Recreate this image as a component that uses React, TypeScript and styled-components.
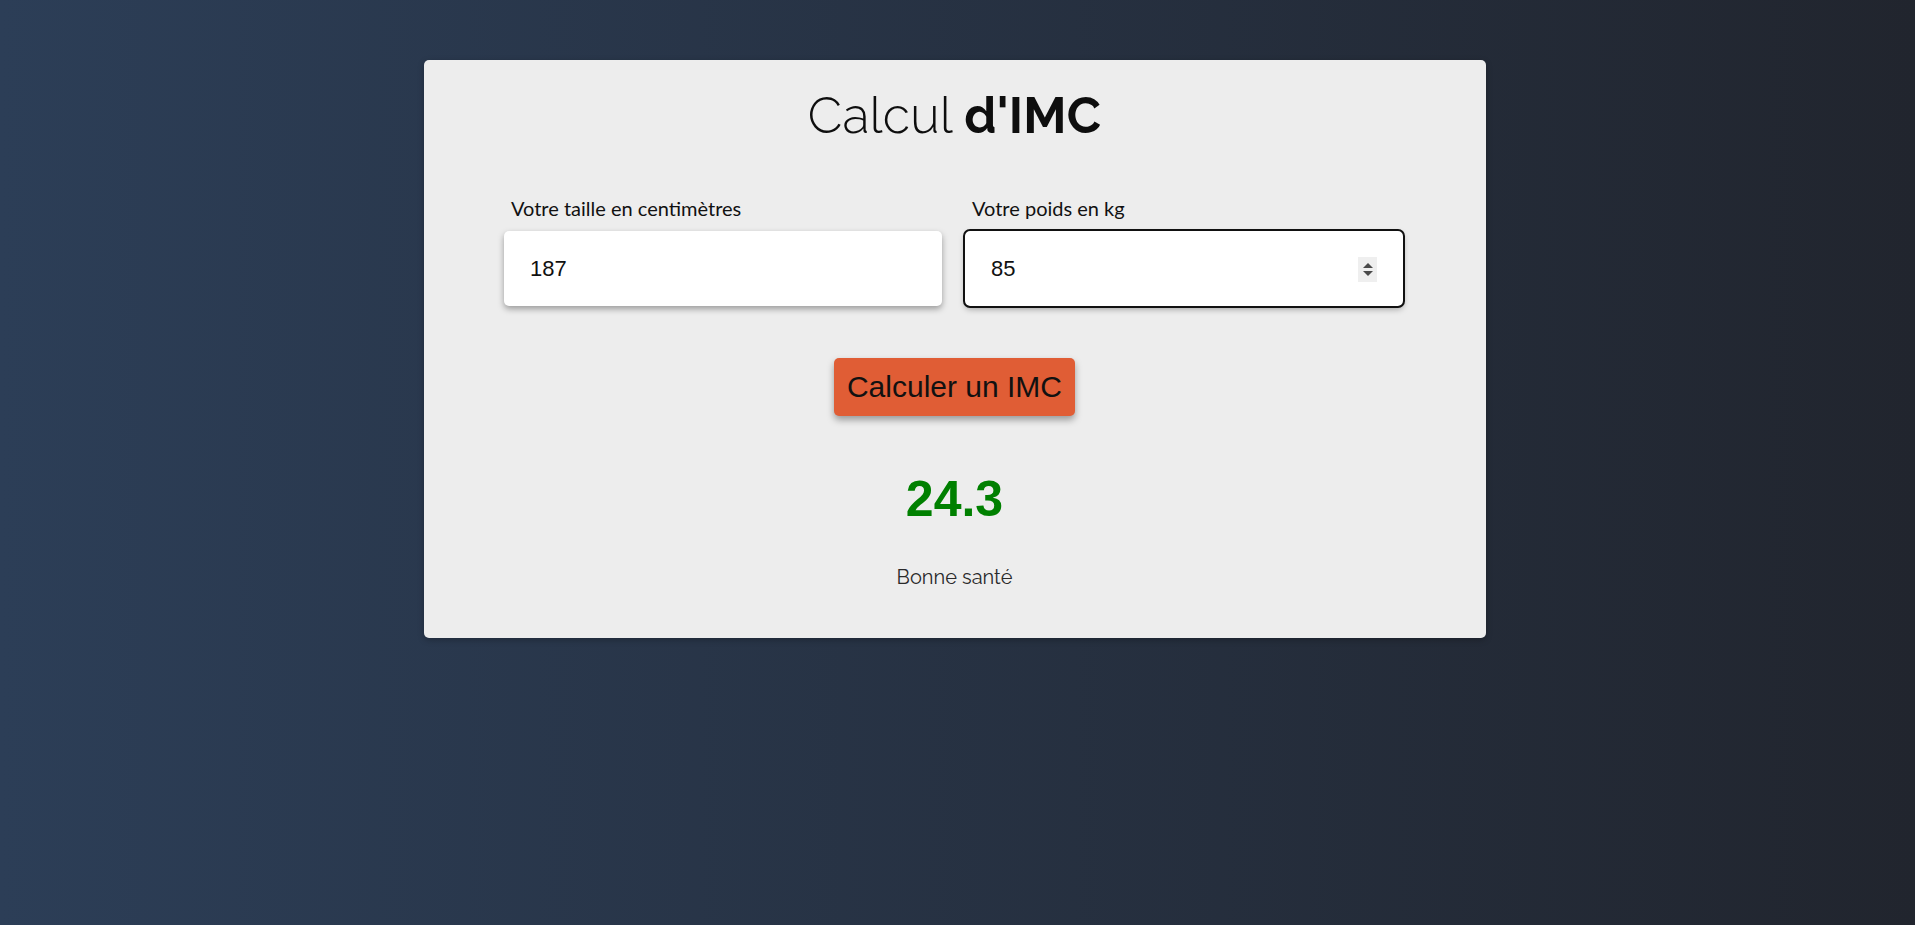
import React from "react";
import styled, { createGlobalStyle } from "styled-components";

const GlobalStyle = createGlobalStyle`
  * { box-sizing: border-box; }
  html, body { margin: 0; padding: 0; }
  body {
    min-height: 100vh;
    background: linear-gradient(to right, #2c3e57, #21252e);
    font-family: "Lato", "Liberation Sans", sans-serif;
  }
`;

const Page = styled.main`
  min-height: 100vh;
  padding-top: 60px;
`;

const Card = styled.section`
  width: 1062px;
  margin: 0 auto;
  transform: translateX(-3px);
  background: #ededed;
  border-radius: 5px;
  box-shadow: 0 2px 6px rgba(0, 0, 0, 0.25);
  padding: 28px 0 49px;
  display: flex;
  flex-direction: column;
  align-items: center;
`;

const Title = styled.h1`
  margin: 0;
  font-family: "Raleway", "Lato", sans-serif;
  font-weight: 300;
  font-size: 50px;
  line-height: 56px;
  color: #0e0e0e;
  letter-spacing: 0.2px;
  strong { font-weight: 700; }
`;

const Fields = styled.div`
  margin-top: 52px;
  display: grid;
  grid-template-columns: 438px 438px;
  column-gap: 23px;
  transform: translateX(-1px);
`;

const Field = styled.label`
  display: flex;
  flex-direction: column;
`;

const LabelText = styled.span`
  font-family: "Lato", sans-serif;
  font-size: 20px;
  line-height: 24px;
  color: #111;
  padding-left: 7px;
  margin-bottom: 11px;
`;

const InputWrap = styled.div`
  position: relative;
`;

const Input = styled.input<{ $focused?: boolean }>`
  width: 100%;
  height: 75px;
  border: none;
  border-radius: 5px;
  background: #fff;
  padding: 0 0 0 26px;
  font-family: "Liberation Sans", Arial, sans-serif;
  font-size: 22px;
  color: #111;
  box-shadow: 0 3px 6px rgba(0, 0, 0, 0.35);
  outline: ${(p) => (p.$focused ? "2px solid #111" : "none")};
  outline-offset: 0;
`;

const Spinner = styled.div`
  position: absolute;
  right: 26px;
  top: 26px;
  width: 19px;
  height: 25px;
  background: #efefef;
  display: flex;
  flex-direction: column;
  align-items: center;
  justify-content: center;
  gap: 3px;
`;

const Tri = styled.span<{ $down?: boolean }>`
  width: 0;
  height: 0;
  border-left: 5px solid transparent;
  border-right: 5px solid transparent;
  ${(p) =>
    p.$down
      ? "border-top: 5px solid #4a4a4a;"
      : "border-bottom: 5px solid #4a4a4a;"}
`;

const Button = styled.button`
  margin-top: 52px;
  height: 58px;
  padding: 0 13px;
  border: none;
  border-radius: 5px;
  background: #e05d35;
  color: #111;
  font-family: "Liberation Sans", Arial, sans-serif;
  font-size: 30px;
  box-shadow: 0 4px 7px rgba(0, 0, 0, 0.35);
  cursor: pointer;
`;

const Result = styled.div`
  margin-top: 54px;
  font-family: "Liberation Sans", Arial, sans-serif;
  font-weight: 700;
  font-size: 50px;
  line-height: 58px;
  color: #008000;
`;

const Status = styled.p`
  margin: 37px 0 0;
  font-family: "Raleway", "Lato", sans-serif;
  font-size: 20px;
  line-height: 24px;
  color: #2a2a2a;
`;

export default function App() {
  return (
    <>
      <GlobalStyle />
      <Page>
        <Card>
          <Title>
            Calcul <strong>d'IMC</strong>
          </Title>
          <Fields>
            <Field>
              <LabelText>Votre taille en centimètres</LabelText>
              <InputWrap>
                <Input type="text" defaultValue="187" />
              </InputWrap>
            </Field>
            <Field>
              <LabelText>Votre poids en kg</LabelText>
              <InputWrap>
                <Input type="text" defaultValue="85" $focused />
                <Spinner>
                  <Tri />
                  <Tri $down />
                </Spinner>
              </InputWrap>
            </Field>
          </Fields>
          <Button type="button">Calculer un IMC</Button>
          <Result>24.3</Result>
          <Status>Bonne santé</Status>
        </Card>
      </Page>
    </>
  );
}
